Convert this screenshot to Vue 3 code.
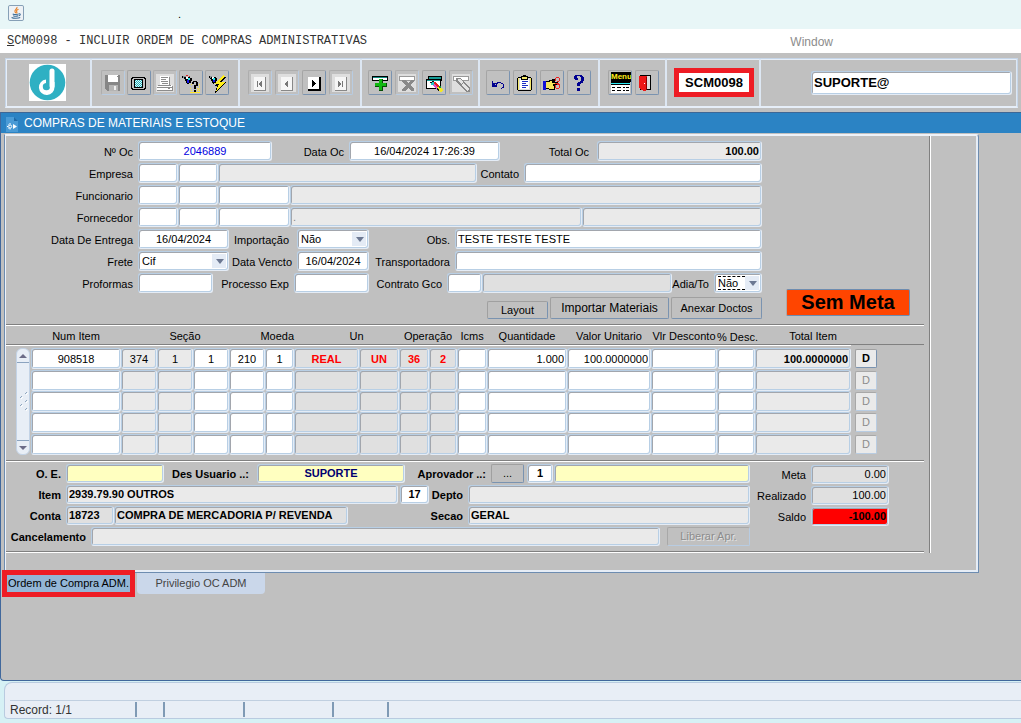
<script setup>
import { ref } from 'vue'

const columns = [
  { key: 'num', name: 'Num Item', tone: '', align: 'center' },
  { key: 'sec1', name: 'Seção 1', tone: 'grey', align: 'center' },
  { key: 'sec2', name: 'Seção 2', tone: 'grey', align: 'center' },
  { key: 'sec3', name: 'Seção 3', tone: '', align: 'center' },
  { key: 'sec4', name: 'Seção 4', tone: '', align: 'center' },
  { key: 'moeda', name: 'Moeda', tone: '', align: 'center' },
  { key: 'moedaNome', name: 'Nome da moeda', tone: 'dim red', align: 'center' },
  { key: 'un', name: 'Un', tone: 'dim red', align: 'center' },
  { key: 'op1', name: 'Operação 1', tone: 'dim red', align: 'center' },
  { key: 'op2', name: 'Operação 2', tone: 'dim red', align: 'center' },
  { key: 'icms', name: 'Icms', tone: '', align: 'center' },
  { key: 'qtd', name: 'Quantidade', tone: '', align: 'right' },
  { key: 'valor', name: 'Valor Unitario', tone: '', align: 'right' },
  { key: 'desc', name: 'Vlr Desconto', tone: '', align: 'right' },
  { key: 'pdesc', name: '% Desc.', tone: '', align: 'right' },
  { key: 'total', name: 'Total Item', tone: 'grey bold', align: 'right' },
]

const items = ref([
  {
    num: '908518', sec1: '374', sec2: '1', sec3: '1', sec4: '210', moeda: '1',
    moedaNome: 'REAL', un: 'UN', op1: '36', op2: '2', icms: '', qtd: '1.000',
    valor: '100.0000000', desc: '', pdesc: '', total: '100.0000000',
  },
  {}, {}, {}, {},
])
</script>

<template>
  <div class="app">
    <header class="titlebar">
      <svg class="java" viewBox="0 0 17 17" aria-hidden="true">
        <rect x=".5" y=".5" width="16" height="16" rx="1.5" fill="#eef2f6" stroke="#7d97b0" />
        <path d="M9.5 2.2C10.5 4 6.5 5 7.4 7.2c.3.7.8 1 .8 1.6M11.2 4.6C9 5.4 8.6 6.4 9.4 7.4c.4.6 0 1-.4 1.4" fill="none" stroke="#e8832a" stroke-width="1.2" />
        <path d="M5 9.5c1.500.700 5 .600 6.200 0M5.500 11.400c1.500.600 4 .600 5.200 0M11.500 9.300c2.200-.400 2 1.800-.200 2.200M3.800 13.300c2 1.100 7 1.100 9.200 0" fill="none" stroke="#3d6c96" stroke-width="1.1" />
      </svg>
      <span class="dot">.</span>
    </header>

    <nav class="menubar">
      <button type="button" class="menu-main"><u>S</u>CM0098 - INCLUIR ORDEM DE COMPRAS ADMINISTRATIVAS</button>
      <button type="button" class="menu-window">Window</button>
    </nav>

    <div class="toolwrap">
      <div class="toolbar">
        <div class="group g-logo">
          <svg class="logo" viewBox="0 0 37 37" aria-label="Logo" role="img">
            <rect width="37" height="37" fill="#fff" />
            <circle cx="18.500" cy="18.500" r="17.800" fill="#2fb0c3" />
            <path d="M23 22V7" stroke="#fff" stroke-width="5" stroke-linecap="round" fill="none" />
            <path d="M17 15.500a7.800 7.800 0 1 0 8.500 7.500V18h-4.500v4.500a3.600 3.600 0 1 1-4-3.400z" fill="#fff" />
          </svg>
        </div>

        <div class="group g-edit">
          <button type="button" class="tb off" aria-label="Salvar">
            <svg viewBox="0 0 22 22"><path d="M3 3h15v16H5l-2-2z" fill="#868686" /><path d="M6 3h10v7H6z" fill="#fff" /><path d="M7 13h9v6H7z" fill="#b4b4b4" /><path d="M12 14h2v4h-2z" fill="#eee" /><path d="M15 4h1v1h-1z" fill="#868686" /></svg>
          </button>
          <button type="button" class="tb" aria-label="Tela">
            <svg viewBox="0 0 22 22"><path d="M4 5h13v1h1v11h-1v1H4v-1H3V6h1z" fill="#000" /><path d="M5 6h11v1h1v9h-1v1H5v-1H4V7h1z" fill="#c0c0c0" /><path d="M6 7h9v9H6z" fill="#000" /><path d="M7 8h7v7H7z" fill="#d8ffff" /><path d="M7 8h1v1H7zm2 0h1v1H9zm2 0h1v1h-1zm2 0h1v1h-1zM8 9h1v1H8zm2 0h1v1h-1zm2 0h1v1h-1zM7 10h1v1H7zm2 0h1v1H9zm2 0h1v1h-1zm2 0h1v1h-1zM8 11h1v1H8zm2 0h1v1h-1zm2 0h1v1h-1zM7 12h1v1H7zm2 0h1v1H9zm2 0h1v1h-1zm2 0h1v1h-1zM8 13h1v1H8zm2 0h1v1h-1zm2 0h1v1h-1zM7 14h1v1H7zm2 0h1v1H9zm2 0h1v1h-1zm2 0h1v1h-1z" fill="#27a9b5" /></svg>
          </button>
          <button type="button" class="tb off" aria-label="Imprimir">
            <svg viewBox="0 0 22 22"><path d="M2 2h18v18H2z" fill="#dedede" /><path d="M6 4h9v9H6z" fill="#fff" /><path d="M7 5h7v1H7zm0 2h5v1H7zm0 2h7v1H7zm1 2h6v1H8zm7-6h1v8h-1z" fill="#8c8c8c" /><path d="M4 13h13l2 2v4H3v-5z" fill="#fff" /><path d="M4 13h13v1H4zm-1 2h15v1H3zm0 3h15v1H3zm15-4h1v5h-1zm-4 2h2v1h-2z" fill="#8c8c8c" /></svg>
          </button>
          <button type="button" class="tb" aria-label="Entrar consulta">
            <svg viewBox="0 0 22 22"><path d="M11 12h1v1h-1zm8 0h1v1h-1zm0 2h1v1h-1zm-2 2h1v1h-1zm2 0h1v1h-1zm-2 2h1v1h-1zm2 0h1v1h-1zm-9-2h1v1h-1zm1 2h1v1h-1zm-1 2h10v1H10zm8-3h1v1h-1z" fill="#ffe72a" /><path d="M2 4h3v1h5v1h2v3h-1v2H9v1H7v-1H6V9H5V7H4V6H2z" fill="#000" /><path d="M3 4h3v1H4v1H3z" fill="#8d969c" /><path d="M6 5h2v2H6z" fill="#fff" /><path d="M8 6h2v2H8z" fill="#20e5ee" /><path d="M7 8h2v3H7z" fill="#1616e5" /><path d="M6 3h2v1H6zm3 1h1v1H9z" fill="#e01d1d" /><path d="M13 9h4v1h1v4h-2v3h-2v-4h2v-3h-2v2h-2v-2h1zm1 9h2v2h-2z" fill="#000" /></svg>
          </button>
          <button type="button" class="tb" aria-label="Executar consulta">
            <svg viewBox="0 0 22 22"><path d="M3 4h3v1h4v1h1v3h-1v2H8v1H7v-1H6V9H5V7H4V6H3z" fill="#000" /><path d="M4 4h2v1H5v1H4z" fill="#8d969c" /><path d="M6 5h2v2H6z" fill="#fff" /><path d="M7 6h2v2H7z" fill="#20e5ee" /><path d="M7 8h2v2H7z" fill="#1616e5" /><path d="M17 3l3 2-4 5h4L9 21l2-7H8l5-5z" fill="#000" /><path d="M17 3l2 1-5 6h5l-9 9 3-7H9z" fill="#ffee18" /></svg>
          </button>
        </div>

        <div class="group g-nav">
          <button type="button" class="tb off" aria-label="Primeiro">
            <svg viewBox="0 0 22 22"><path d="M2 2h18v18H2z" fill="#dedede" /><path d="M5 5h12v14H5z" fill="#888" /><path d="M5 5h11v13H5z" fill="#f6f6f6" /><path d="M8 9h1v6H8zm4 0h1v6h-1v-1h-1v-1h-1v-2h1v-1h1z" fill="#777" /></svg>
          </button>
          <button type="button" class="tb off" aria-label="Anterior">
            <svg viewBox="0 0 22 22"><path d="M2 2h18v18H2z" fill="#dedede" /><path d="M5 5h12v14H5z" fill="#888" /><path d="M5 5h11v13H5z" fill="#f6f6f6" /><path d="M11 9h1v6h-1v-1h-1v-1H9v-2h1v-1h1z" fill="#777" /></svg>
          </button>
          <button type="button" class="tb" aria-label="Próximo">
            <svg viewBox="0 0 22 22"><path d="M5 5h13v14H5z" fill="#000" /><path d="M5 5h11v12H5z" fill="#fff" /><path d="M9 8v7h1v-1h1v-1h1v-1h1v-1h-1v-1h-1V9h-1V8z" fill="#000" /></svg>
          </button>
          <button type="button" class="tb off" aria-label="Último">
            <svg viewBox="0 0 22 22"><path d="M2 2h18v18H2z" fill="#dedede" /><path d="M5 5h12v14H5z" fill="#888" /><path d="M5 5h11v13H5z" fill="#f6f6f6" /><path d="M12 9h1v6h-1zM8 9h1v1h1v1h1v2h-1v1H9v1H8z" fill="#777" /></svg>
          </button>
        </div>

        <div class="group g-record">
          <button type="button" class="tb" aria-label="Inserir registro">
            <svg viewBox="0 0 22 22"><path d="M3 4h16v5H3z" fill="#000" /><path d="M4 5h14v3H4z" fill="#fff" /><path d="M4 5h14v1H4z" fill="#138b83" /><path d="M10 7h4v4h4v4h-4v4h-4v-4H6v-4h4z" fill="#054d05" /><path d="M10 7h3v4h4v3h-4v4h-3v-4H6v-3h4z" fill="#12b912" /></svg>
          </button>
          <button type="button" class="tb off" aria-label="Remover registro">
            <svg viewBox="0 0 22 22"><path d="M2 2h18v18H2z" fill="#dedede" /><path d="M3 4h16v5H3z" fill="#999" /><path d="M4 5h14v3H4z" fill="#fff" /><path d="M6 8h3l3 3 3-3h3v2l-4 3 4 4v2h-3l-3-3-3 3H6v-2l4-4-4-3z" fill="#898989" /></svg>
          </button>
          <button type="button" class="tb" aria-label="Limpar registro">
            <svg viewBox="0 0 22 22"><path d="M5 4h14v5H5zM3 7h15v10H3z" fill="#000" /><path d="M6 5h12v2H6z" fill="#159b95" /><path d="M4 9h13v7H4z" fill="#fff" /><path d="M4 8h13v1H4z" fill="#159b95" /><path d="M7 10l3-1 8 8-3 2z" fill="#111" /><path d="M9 10h2v3H8z" fill="#20c5c7" /><path d="M11 10h2l3 4-2 2-3-3z" fill="#e52323" /><path d="M11 12l4 4-2 1-3-4z" fill="#dc53cd" /><path d="M14 15l3-1 3 4-2 3z" fill="#f4e923" /><path d="M16 14h2v2h-2z" fill="#119534" /></svg>
          </button>
          <button type="button" class="tb off" aria-label="Bloquear registro">
            <svg viewBox="0 0 22 22"><path d="M2 2h18v18H2z" fill="#dedede" /><path d="M3 4h16v5H3z" fill="#999" /><path d="M4 5h14v3H4z" fill="#fff" /><path d="M6 6h4l10 10v4h-4L6 10z" fill="#888" /><path d="M8 7h2l3 3-2 2-3-3zM13 11l6 6-2 2-5-6z" fill="#e4e4e4" /></svg>
          </button>
        </div>

        <div class="group g-tools">
          <button type="button" class="tb" aria-label="Desfazer">
            <svg viewBox="0 0 22 22"><path d="M5 9h1v4h2v1h2v1H5zm4 3H8v-1h2v-1h4v1h2v1h1v4h-2v1h-1v-1h1v-1h1v-3h-2v-1h-3v1h-1v1H9z" fill="#000090" /><path d="M6 11h2v2h2v2H6z" fill="#000090" /></svg>
          </button>
          <button type="button" class="tb" aria-label="Lista de valores">
            <svg viewBox="0 0 22 22"><path d="M4 5h13v1h1v12h-1v1H4v-1H3V6h1z" fill="#000" /><path d="M4 6h13v12H4z" fill="#f5e86a" /><path d="M5 6h11v12H5z" fill="#ddd" /><path d="M6 7h9v10H6z" fill="#fff" /><path d="M7 4h2V3h3v1h2v4H7z" fill="#000" /><path d="M8 5h5v2H8z" fill="#f5e86a" /><path d="M8 9h6v1H8zm0 2h4v1H8zm0 2h6v1H8zm0 2h4v1H8z" fill="#1b2cc5" /></svg>
          </button>
          <button type="button" class="tb" aria-label="Editar">
            <svg viewBox="0 0 22 22"><path d="M2 9h3v9H2z" fill="#1111d8" /><path d="M5 9h3V8h3V7h3v3h3v3h-3v5H8v-1H5z" fill="#000" /><path d="M5 10h4V9h2v2h4v1h-3v2h1v3H8v-1H5z" fill="#f4e45c" /><path d="M15 5h3v1h1v3h-1v1h-2v1h2v1h1v4h-1v1h-3v-1h-1v-3h1v3h3v-3h-2v-1h-2v-1h2V9h2V6h-3v3h-1V6h1z" fill="#ed2020" /></svg>
          </button>
          <button type="button" class="tb" aria-label="Ajuda">
            <svg viewBox="0 0 22 22"><path d="M7 3h7v1h1v1h1v4h-1v2h-2v1h-1v2H9v-3h1v-1h2V9h1V5h-1V4H9v2h1v2H7V7H6V4h1zm2 13h3v3H9z" fill="#000090" /></svg>
          </button>
        </div>

        <div class="group g-menu">
          <button type="button" class="tb menu-icon" aria-label="Menu">
            <span class="menu-word">Menu</span>
            <svg viewBox="0 0 22 11"><path d="M2 0h19v3H2z" fill="#000" /><path d="M2 1h19v1H2z" fill="#2aeaf5" /><path d="M2 3h19v8H2z" fill="#fff" /><path d="M3 5h3v1H3zm5 0h4v1H8zm6 0h2v1h-2zm3 0h3v1h-3zM3 8h3v1H3zm5 0h4v1H8zm6 0h2v1h-2zm3 0h3v1h-3z" fill="#000" /></svg>
          </button>
          <button type="button" class="tb" aria-label="Sair">
            <svg viewBox="0 0 22 22"><path d="M4 3h11v15H4z" fill="#000" /><path d="M5 4h9v13H5z" fill="#ddd" /><path d="M3 4h7l1 1v13l-3 1-5-3z" fill="#ed1717" /><path d="M10 5h1v13h-1z" fill="#8a0000" /><path d="M8 11h1v1H8z" fill="#fff" /></svg>
          </button>
        </div>

        <div class="group g-code"><strong class="code">SCM0098</strong></div>
        <div class="group g-user">
          <input class="field user" type="text" value="SUPORTE@" aria-label="Usuário" />
        </div>
      </div>
    </div>

    <main class="window">
      <h1 class="caption">
        <svg viewBox="0 0 12 16" aria-hidden="true"><path d="M0 1h8l4 4v11H0z" fill="#4a9bd6" /><path d="M8 1v4h4z" fill="#1f6ba8" /><path d="M4 7v1.500M4 12v1.500M1 10.500h1M2 8.500l.8.700M2 12.500l.8-.700" stroke="#fff" /><circle cx="4.200" cy="10.500" r="1.500" fill="none" stroke="#fff" /><path d="M7 8l4 2.500L7 13z" fill="#fff" /></svg>
        COMPRAS DE MATERIAIS E ESTOQUE
      </h1>

      <section class="panel">
        <div class="canvas">
          <div class="upper">
            <form class="order" @submit.prevent>
              <div class="row">
                <label class="first" for="oc">Nº Oc</label>
                <input id="oc" class="field w134 blue center" value="2046889" />
                <label class="w77" for="dataoc">Data Oc</label>
                <input id="dataoc" class="field w151 center" value="16/04/2024 17:26:39" />
                <label class="w97 wide-pad" for="total">Total Oc</label>
                <input id="total" class="field grow grey bold right" value="100.00" readonly />
              </div>
              <div class="row">
                <label class="first" for="emp">Empresa</label>
                <input id="emp" class="field w40" />
                <input class="field w40" aria-label="Filial" />
                <input class="field grow grey" aria-label="Nome da empresa" readonly />
                <label class="w47" for="contato">Contato</label>
                <input id="contato" class="field w238" />
              </div>
              <div class="row">
                <label class="first" for="func">Funcionario</label>
                <input id="func" class="field w40" />
                <input class="field w40" aria-label="Funcionario filial" />
                <input class="field w72" aria-label="Funcionario código" />
                <input class="field grow grey" aria-label="Nome do funcionario" readonly />
              </div>
              <div class="row">
                <label class="first" for="forn">Fornecedor</label>
                <input id="forn" class="field w40" />
                <input class="field w40" aria-label="Fornecedor filial" />
                <input class="field w72" aria-label="Fornecedor código" />
                <input class="field grow grey faint" aria-label="Nome do fornecedor" value="." readonly />
                <input class="field w180 grey" aria-label="Documento do fornecedor" readonly />
              </div>
              <div class="row">
                <label class="first" for="entrega">Data De Entrega</label>
                <input id="entrega" class="field w91 center" value="16/04/2024" />
                <label class="w68 wide-pad" for="imp">Importação</label>
                <span class="field pick w72"><select id="imp"><option>Não</option><option>Sim</option></select></span>
                <label class="w86" for="obs">Obs.</label>
                <input id="obs" class="field grow" value="TESTE TESTE TESTE" />
              </div>
              <div class="row">
                <label class="first" for="frete">Frete</label>
                <span class="field pick w91"><select id="frete"><option>Cif</option><option>Fob</option></select></span>
                <label class="w68" for="vencto">Data Vencto</label>
                <input id="vencto" class="field w72 center" value="16/04/2024" />
                <label class="w86" for="transp">Transportadora</label>
                <input id="transp" class="field grow" />
              </div>
              <div class="row">
                <label class="first" for="prof">Proformas</label>
                <input id="prof" class="field w75" />
                <label class="w81" for="proc">Processo Exp</label>
                <input id="proc" class="field w75" />
                <label class="w78" for="gco">Contrato Gco</label>
                <input id="gco" class="field w35" />
                <input class="field grow dim" aria-label="Descrição do contrato" readonly />
                <label class="w42" for="adia">Adia/To</label>
                <span class="field pick focus w48"><select id="adia"><option>Não</option><option>Sim</option></select></span>
              </div>
              <div class="actions">
                <button type="button" class="btn layout">Layout</button>
                <button type="button" class="btn import">Importar Materiais</button>
                <button type="button" class="btn attach">Anexar Doctos</button>
              </div>
            </form>
            <aside class="status-box"><output class="sem-meta">Sem Meta</output></aside>
          </div>

          <div class="rule"></div>

          <table class="items">
            <colgroup>
              <col class="c-scroll" /><col class="c90" /><col class="c36" /><col class="c36" /><col class="c36" /><col class="c36" />
              <col class="c29" /><col class="c65" /><col class="c40" /><col class="c30" /><col class="c28" /><col class="c30" />
              <col class="c80" /><col class="c84" /><col class="c66" /><col class="c38" /><col class="c96" /><col />
            </colgroup>
            <thead>
              <tr>
                <td></td>
                <th>Num Item</th>
                <th colspan="3" class="push">Seção</th>
                <th colspan="2" class="end">Moeda</th>
                <th colspan="2" class="push">Un</th>
                <th colspan="2">Operação</th>
                <th>Icms</th>
                <th>Quantidade</th>
                <th>Valor Unitario</th>
                <th>Vlr Desconto</th>
                <th class="low">% Desc.</th>
                <th class="push">Total Item</th>
                <td></td>
              </tr>
            </thead>
            <tbody>
              <tr v-for="(item, i) in items" :key="i">
                <td v-if="i === 0" rowspan="5" class="scroll-cell">
                  <div class="scroll">
                    <button type="button" class="arrow up" aria-label="Rolar para cima"></button>
                    <svg viewBox="0 0 9 20" aria-hidden="true"><path d="M6 2l2-2M1 6l2-2M6 10l2-2M1 14l2-2M6 18l2-2" stroke="#8ea5bd" fill="none" /><path d="M7 3l2-2M2 7l2-2M7 11l2-2M2 15l2-2M7 19l2-2" stroke="#fff" fill="none" /></svg>
                    <button type="button" class="arrow down" aria-label="Rolar para baixo"></button>
                  </div>
                </td>
                <td v-for="c in columns" :key="c.key">
                  <input
                    class="field cell"
                    :class="[c.tone, c.align]"
                    :value="item[c.key]"
                    :aria-label="`${c.name}, linha ${i + 1}`"
                  />
                </td>
                <td class="d-cell">
                  <button type="button" class="btn d" :disabled="i > 0" :aria-label="`D, linha ${i + 1}`">D</button>
                </td>
              </tr>
            </tbody>
          </table>

          <div class="rule"></div>

          <div class="lower">
            <div class="details">
              <div class="row short">
                <label class="w60" for="oe">O. E.</label>
                <input id="oe" class="field w98 yellow" />
                <label class="w93 wide-pad" for="usr">Des Usuario ..:</label>
                <input id="usr" class="field w148 yellow navy center" value="SUPORTE" />
                <label class="w86" for="aprov">Aprovador ..:</label>
                <button type="button" class="btn dots">...</button>
                <input id="aprov" class="field w26 center" value="1" />
                <input class="field grow yellow" aria-label="Nome do aprovador" />
              </div>
              <div class="row short">
                <label class="w60" for="item">Item</label>
                <input id="item" class="field grow grey" value="2939.79.90 OUTROS" readonly />
                <input class="field w29 center after" aria-label="Código do depto" value="17" />
                <label class="w39" for="depto">Depto</label>
                <input id="depto" class="field w282 grey" readonly />
              </div>
              <div class="row short">
                <label class="w60" for="conta">Conta</label>
                <input id="conta" class="field w48 dim" value="18723" readonly />
                <input class="field w234 dim" aria-label="Descrição da conta" value="COMPRA DE MERCADORIA P/ REVENDA" readonly />
                <label class="grow" for="secao">Secao</label>
                <input id="secao" class="field w282 grey" value="GERAL" readonly />
              </div>
              <div class="row short">
                <label class="w85" for="canc">Cancelamento</label>
                <input id="canc" class="field grow grey" readonly />
                <button type="button" class="btn release" disabled>Liberar Apr.</button>
              </div>
            </div>
            <div class="budget">
              <div class="row short">
                <label class="w60" for="meta">Meta</label>
                <input id="meta" class="field w78 dim right" value="0.00" readonly />
              </div>
              <div class="row short">
                <label class="w60" for="real">Realizado</label>
                <input id="real" class="field w78 dim right" value="100.00" readonly />
              </div>
              <div class="row short">
                <label class="w60" for="saldo">Saldo</label>
                <input id="saldo" class="field w78 alert bold right" value="-100.00" readonly />
              </div>
            </div>
          </div>

          <div class="rule last"></div>
        </div>
      </section>

      <nav class="tabs">
        <button type="button" class="tab active">Ordem de Compra ADM.</button>
        <button type="button" class="tab">Privilegio OC ADM</button>
      </nav>
    </main>

    <footer class="footer">
      <div class="message"></div>
      <div class="cells">
        <span class="s127">Record: 1/1</span><span class="s28"></span><span class="s80"></span><span class="s89"></span><span class="s55"></span>
      </div>
    </footer>
  </div>
</template>

<style>
body {
  background: #d6f1f5;
}
</style>

<style scoped>
* {
  box-sizing: border-box;
}
.app {
  display: flex;
  flex-direction: column;
  min-height: 100vh;
  padding-bottom: 4px;
  background: #d6f1f5;
  font: 11px/13px "Liberation Sans", Arial, sans-serif;
  color: #000;
}
button,
input,
select {
  font: inherit;
  color: inherit;
  margin: 0;
}
button {
  padding: 0;
  white-space: nowrap;
}
.titlebar {
  display: flex;
  align-items: center;
  height: 29px;
  padding: 0 8px 3px;
  background: #e8f6f7;
}
.java {
  width: 16px;
  height: 16px;
}
.dot {
  margin-left: 154px;
  padding-top: 3px;
}
.menubar {
  display: flex;
  align-items: center;
  height: 24px;
  padding: 0 188px 0 7px;
  background: #fff;
}
.menubar button {
  border: 0;
  background: none;
}
.menu-main {
  font: 12px/14px "Liberation Mono", "Courier New", monospace;
  color: #333;
}
.menubar .menu-window {
  margin-left: auto;
  padding-top: 2px;
  font-size: 12px;
  color: #8c8c8c;
}

/* toolbar */
.toolwrap {
  padding: 5px 3px 4px 5px;
  background: #c0c0c0;
}
.toolbar {
  display: flex;
  height: 50px;
  border: 1px solid #c5d5e8;
  border-bottom: 2px solid #e6eef8;
  box-shadow: inset 1px 1px #e6eef8;
}
.group {
  display: flex;
  align-items: center;
  gap: 3px;
  flex: none;
  border-right: 2px solid #dde7f3;
}
.g-logo {
  width: 86px;
  padding-left: 23px;
}
.logo {
  width: 37px;
  height: 37px;
}
.g-edit {
  width: 148px;
  padding-left: 9px;
  gap: 2px;
}
.g-nav {
  width: 122px;
  padding-left: 8px;
}
.g-record {
  width: 118px;
  padding-left: 6px;
}
.g-tools {
  width: 120px;
  padding-left: 6px;
}
.g-menu {
  width: 67px;
  padding-left: 8px;
}
.g-code {
  width: 94px;
  padding-left: 7px;
}
.g-user {
  flex: 1;
  padding: 0 4px 0 50px;
  border-right-width: 1px;
}
.tb {
  width: 24px;
  height: 25px;
  border: 1px solid;
  border-color: #a5a5a5 #7a93b0 #7a93b0 #a5a5a5;
  border-radius: 2px;
  background: #c0c0c0;
}
.tb.off {
  border-color: #adadad #b8cce2 #b8cce2 #adadad;
}
.tb svg {
  display: block;
  width: 22px;
  height: 22px;
  shape-rendering: crispEdges;
}
.tb.menu-icon {
  display: flex;
  flex-direction: column;
  justify-content: center;
  overflow: hidden;
}
.tb.menu-icon svg {
  height: 11px;
}
.menu-word {
  align-self: stretch;
  margin-left: 2px;
  background: #000;
  color: #ffee18;
  font: bold 8px/10px "Liberation Sans", Arial, sans-serif;
}
.code {
  width: 80px;
  border: 5px solid #ee1c24;
  background: #fff;
  font-size: 13px;
  line-height: 19px;
  text-align: center;
}

/* fields */
.field {
  flex: none;
  min-width: 0;
  height: 20px;
  padding: 0 2px;
  border: 1px solid;
  border-color: #b8cfe5 #e4ecf6 #e4ecf6 #b8cfe5;
  border-radius: 3px;
  background: #fff;
  box-shadow: inset 1px 1px #a2a6ad, inset -1px -1px #b8cfe5;
  outline: 0;
}
.field.user {
  flex: 1;
  height: 24px;
  font-size: 13px;
  font-weight: bold;
}
.grow,
.field.grow {
  flex: 1;
}
.field.grey {
  background: #eaeaea;
}
.field.dim {
  background: #e0e0e0;
}
.field.yellow {
  background: #ffffc0;
}
.field.alert {
  background: #f00;
}
.center {
  text-align: center;
}
.right {
  text-align: right;
}
.bold,
.red {
  font-weight: bold;
}
.red {
  color: #f00;
}
.blue {
  color: #0000e0;
}
.navy {
  color: #000070;
}
.faint {
  color: #888;
}
.field.pick {
  display: flex;
  position: relative;
  padding: 2px 2px 2px 3px;
}
.pick::before {
  content: "";
  position: absolute;
  top: 2px;
  right: 2px;
  bottom: 2px;
  width: 14px;
  background: #e4ebf5;
  pointer-events: none;
}
.pick::after {
  content: "";
  position: absolute;
  top: 7px;
  right: 4px;
  border: 4px solid transparent;
  border-top: 5px solid #6c7892;
  border-bottom: 0;
  pointer-events: none;
}
.pick select {
  width: 100%;
  height: 14px;
  padding: 0;
  border: 0;
  background: transparent;
  appearance: none;
  outline: 0;
}
.pick.focus select {
  width: 27px;
  border-top: 1px dashed #000;
  border-bottom: 1px dashed #000;
}

/* buttons */
.btn {
  flex: none;
  border: 1px solid;
  border-color: #a0a0a0 #7a93b0 #7a93b0 #a0a0a0;
  border-radius: 2px;
  background: #c0c0c0;
}
.btn:disabled {
  border-color: #a8a8a8 #b8cce2 #b8cce2 #a8a8a8;
  color: #8c8c8c;
}

/* form window */
.window {
  flex: 1;
  border-left: 1px solid #41689c;
  border-bottom: 1px solid #41689c;
  border-bottom-left-radius: 4px;
  background: #c0c0c0;
}
.caption {
  display: flex;
  align-items: center;
  gap: 6px;
  height: 21px;
  margin: 0 0 1px;
  padding: 1px 5px 0;
  border-top: 1px solid #3d6796;
  background: #2b83c4;
  color: #fff;
  font-size: 12px;
  font-weight: normal;
}
.caption svg {
  width: 12px;
  height: 16px;
}
.panel {
  display: flex;
  margin: 0 42px 0 3px;
  border: 1px solid #6d8cb0;
  border-top-color: #eef2f8;
  border-top-right-radius: 3px;
  box-shadow: inset 1px 1px #eef2f8, inset -2px -2px #e6edf6;
  padding: 1px 48px 19px 1px;
}
.canvas {
  flex: 1;
  border-right: 1px solid #808080;
  box-shadow: 1px 0 #fff;
}
.upper {
  display: flex;
}
.order {
  flex: 1;
  padding-top: 5px;
}
.row {
  display: flex;
  align-items: center;
  height: 20px;
  margin-bottom: 2px;
}
label {
  flex: none;
  padding: 2px 5px 0 0;
  text-align: right;
  white-space: nowrap;
}
label.first {
  width: 132px;
}
label.wide-pad {
  padding-right: 8px;
}
.w26 { width: 26px; }
.w29 { width: 29px; }
.w35 { width: 35px; }
.w39 { width: 39px; }
.w40 { width: 40px; }
.w42 { width: 42px; }
.w47 { width: 47px; }
.w48 { width: 48px; }
.w60 { width: 60px; }
.w68 { width: 68px; }
.w72 { width: 72px; }
.w75 { width: 75px; }
.w77 { width: 77px; }
.w78 { width: 78px; }
.w81 { width: 81px; }
.w85 { width: 85px; }
.w86 { width: 86px; }
.w91 { width: 91px; }
.w93 { width: 93px; }
.w97 { width: 97px; }
.w98 { width: 98px; }
.w134 { width: 134px; }
.w148 { width: 148px; }
.w151 { width: 151px; }
.w180 { width: 180px; }
.w234 { width: 234px; }
.w238 { width: 238px; }
.w282 { width: 282px; }
.actions {
  display: flex;
  align-items: flex-end;
  justify-content: flex-end;
  gap: 2px;
  padding-top: 2px;
}
.layout {
  width: 61px;
  height: 18px;
}
.import {
  width: 119px;
  height: 22px;
  font-size: 12px;
}
.attach {
  width: 91px;
  height: 22px;
}
.status-box {
  display: flex;
  flex: none;
  align-items: flex-end;
  width: 167px;
  padding: 0 19px 3px 24px;
}
.sem-meta {
  width: 124px;
  border: 1px solid #6d8cb0;
  border-left-color: #b0a8a8;
  border-radius: 2px;
  background: #ff4500;
  font-size: 20px;
  font-weight: bold;
  line-height: 25px;
  text-align: center;
}
.rule {
  height: 2px;
  margin: 5px 5px 0 0;
  border-top: 1px solid #808080;
  border-bottom: 1px solid #fff;
}

/* item grid */
.items {
  width: 100%;
  table-layout: fixed;
  border-collapse: separate;
  border-spacing: 0;
}
.items td,
.items th {
  padding: 0;
}
.items thead td,
.items th {
  height: 19px;
  padding-top: 2px;
  border-bottom: 1px solid #808080;
  box-shadow: 0 1px #fff;
  font-weight: normal;
  text-align: center;
  white-space: nowrap;
}
.items thead td:last-child {
  border-bottom: 0;
  box-shadow: none;
  background: linear-gradient(#808080, #808080) left bottom / calc(100% - 5px) 1px no-repeat;
}
.items th.push {
  padding-left: 20px;
}
.items th.end {
  text-align: right;
}
.items th.low {
  padding-top: 5px;
}
.items tbody::before {
  content: "";
  display: block;
  height: 3px;
}
.c-scroll { width: 25px; }
.c28 { width: 28px; }
.c29 { width: 29px; }
.c30 { width: 30px; }
.c36 { width: 36px; }
.c38 { width: 38px; }
.c40 { width: 40px; }
.c65 { width: 65px; }
.c66 { width: 66px; }
.c80 { width: 80px; }
.c84 { width: 84px; }
.c90 { width: 90px; }
.c96 { width: 96px; }
.cell {
  display: block;
  width: 100%;
  height: 21px;
}
.scroll-cell {
  height: 105px;
}
.scroll {
  display: flex;
  flex-direction: column;
  align-items: center;
  justify-content: space-between;
  width: 14px;
  height: 107px;
  margin-left: 10px;
  border: 1px solid #c3d3e6;
  border-radius: 6px;
  background: #e8eef6;
}
.scroll svg {
  width: 9px;
  height: 20px;
}
.arrow {
  position: relative;
  width: 12px;
  height: 14px;
  border: 0;
  background: none;
}
.arrow.up {
  border-bottom: 1px solid #8ba3bf;
}
.arrow.down {
  border-top: 1px solid #8ba3bf;
}
.arrow::after {
  content: "";
  position: absolute;
  top: 5px;
  left: 2px;
  border: 4px solid transparent;
}
.arrow.up::after {
  border-top: 0;
  border-bottom-color: #6c6c88;
}
.arrow.down::after {
  border-bottom: 0;
  border-top-color: #6c6c88;
}
.items .d-cell {
  padding-left: 4px;
}
.btn.d {
  display: block;
  width: 22px;
  height: 19px;
  background: #eaeaea;
}
.btn.d:enabled {
  font-weight: bold;
}

/* lower block */
.lower {
  display: flex;
  padding-top: 1px;
}
.details {
  flex: 1;
  font-weight: bold;
}
.budget {
  flex: none;
  width: 179px;
  padding-left: 1px;
  padding-top: 1px;
}
.row.short {
  margin-bottom: 0;
}
.short .field {
  height: 19px;
}
.short + .short {
  margin-top: 1px;
}
.dots {
  width: 33px;
  height: 19px;
  margin-right: 3px;
  font-weight: normal;
}
.dots + .field {
  margin-right: 1px;
}
.after {
  margin-left: 2px;
}
.release {
  width: 83px;
  height: 19px;
  margin-left: 7px;
  font-weight: normal;
  text-shadow: 1px 1px #e4e4e4;
}

/* tabs */
.tabs {
  display: flex;
  align-items: flex-start;
  gap: 2px;
  padding-left: 1px;
}
.tab {
  width: 128px;
  height: 21px;
  border: 0;
  border-radius: 0 0 4px 4px;
  background: #cad7ea;
  color: #444;
}
.tab.active {
  width: 133px;
  height: 27px;
  margin-top: -3px;
  border: 5px solid #ee1c24;
  border-radius: 0;
  background: #94b6d6;
  color: #000;
}

/* footer */
.footer {
  padding-left: 5px;
  border: 1px solid #b9cbe0;
  border-right: 0;
  border-radius: 8px 0 0 4px;
  margin: 1px 0 0 4px;
  background: #e8eef6;
}
.message {
  height: 18px;
  border-bottom: 1px solid #c0cfe0;
}
.cells {
  display: flex;
  height: 17px;
  padding-top: 1px;
  font-size: 12px;
  line-height: 17px;
  color: #333;
}
.cells span {
  border-right: 2px solid #7f9ab5;
  height: 15px;
}
.s127 { width: 127px; }
.s28 { width: 28px; }
.s80 { width: 80px; }
.s89 { width: 89px; }
.s55 { width: 55px; }
</style>
